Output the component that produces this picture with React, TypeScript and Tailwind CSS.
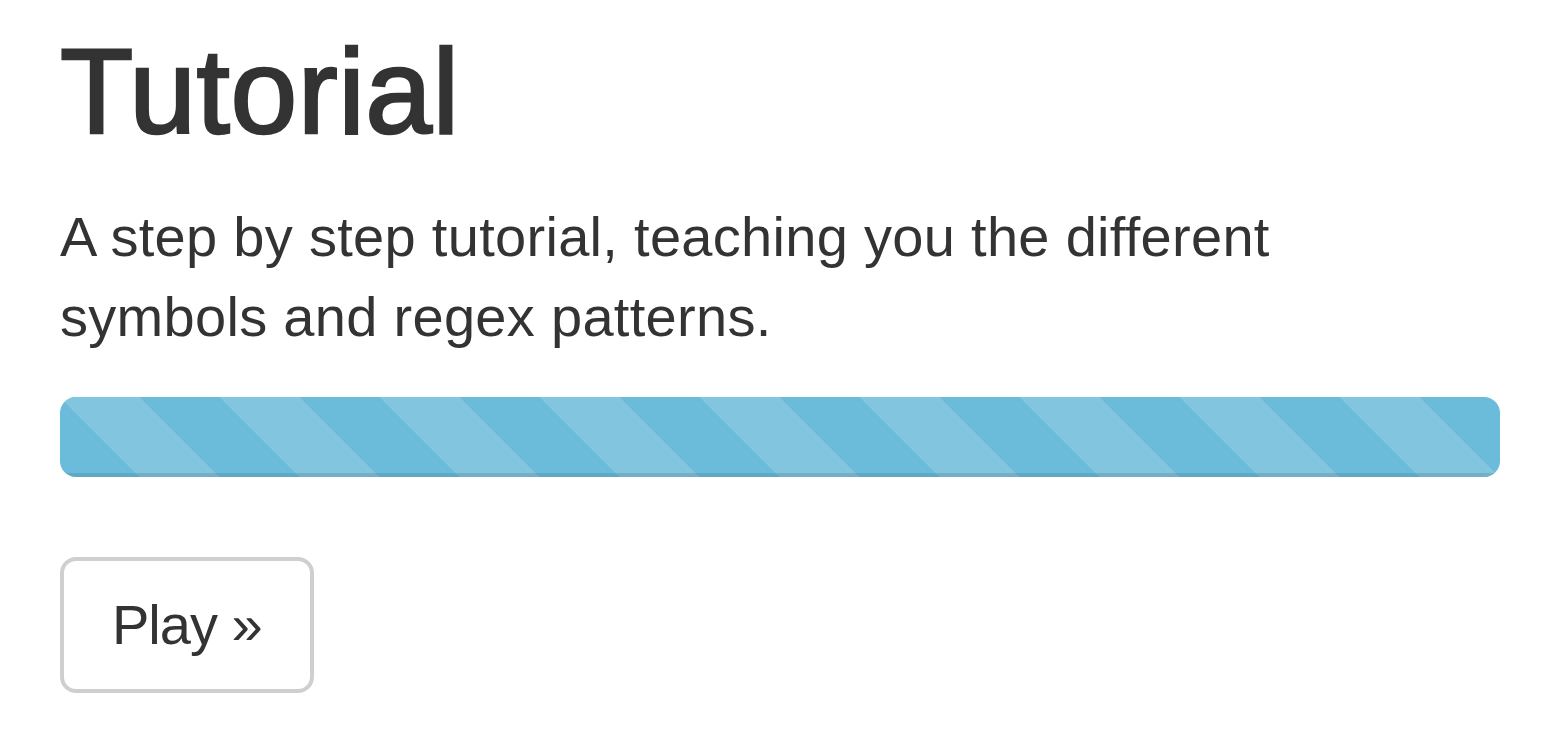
import React from "react";

export default function App() {
  return (
    <div className="min-h-[734px] w-full bg-white text-[#333] font-['Liberation_Sans',Arial,sans-serif]">
      <div className="px-[60px] pt-[25px]">
        <h2 className="m-0 text-[120px] leading-[132px] font-normal tracking-[0.5px] [-webkit-text-stroke:2.5px_#333]">
          Tutorial
        </h2>
        <p className="mt-[40px] mb-[40px] max-w-[1360px] text-[56px] leading-[80px] tracking-[0.3px]">
          A step by step tutorial, teaching you the different symbols and regex patterns.
        </p>
        <div className="h-[80px] w-[1440px] overflow-hidden rounded-[16px] bg-[#f5f5f5] mb-[80px]">
          <div className="h-full w-full bg-[#6bbbda] bg-[length:160px_160px] bg-[linear-gradient(45deg,#81c5df_25%,transparent_25%,transparent_50%,#81c5df_50%,#81c5df_75%,transparent_75%,transparent)] shadow-[inset_0_-4px_0_rgba(0,0,0,0.1)]" />
        </div>
        <button className="box-border h-[136px] rounded-[16px] border-[4px] border-solid border-[#cfcfcf] bg-white px-[48px] py-[24px] text-[56px] leading-[80px] tracking-[-1px] text-[#333]">
          Play »
        </button>
      </div>
    </div>
  );
}
